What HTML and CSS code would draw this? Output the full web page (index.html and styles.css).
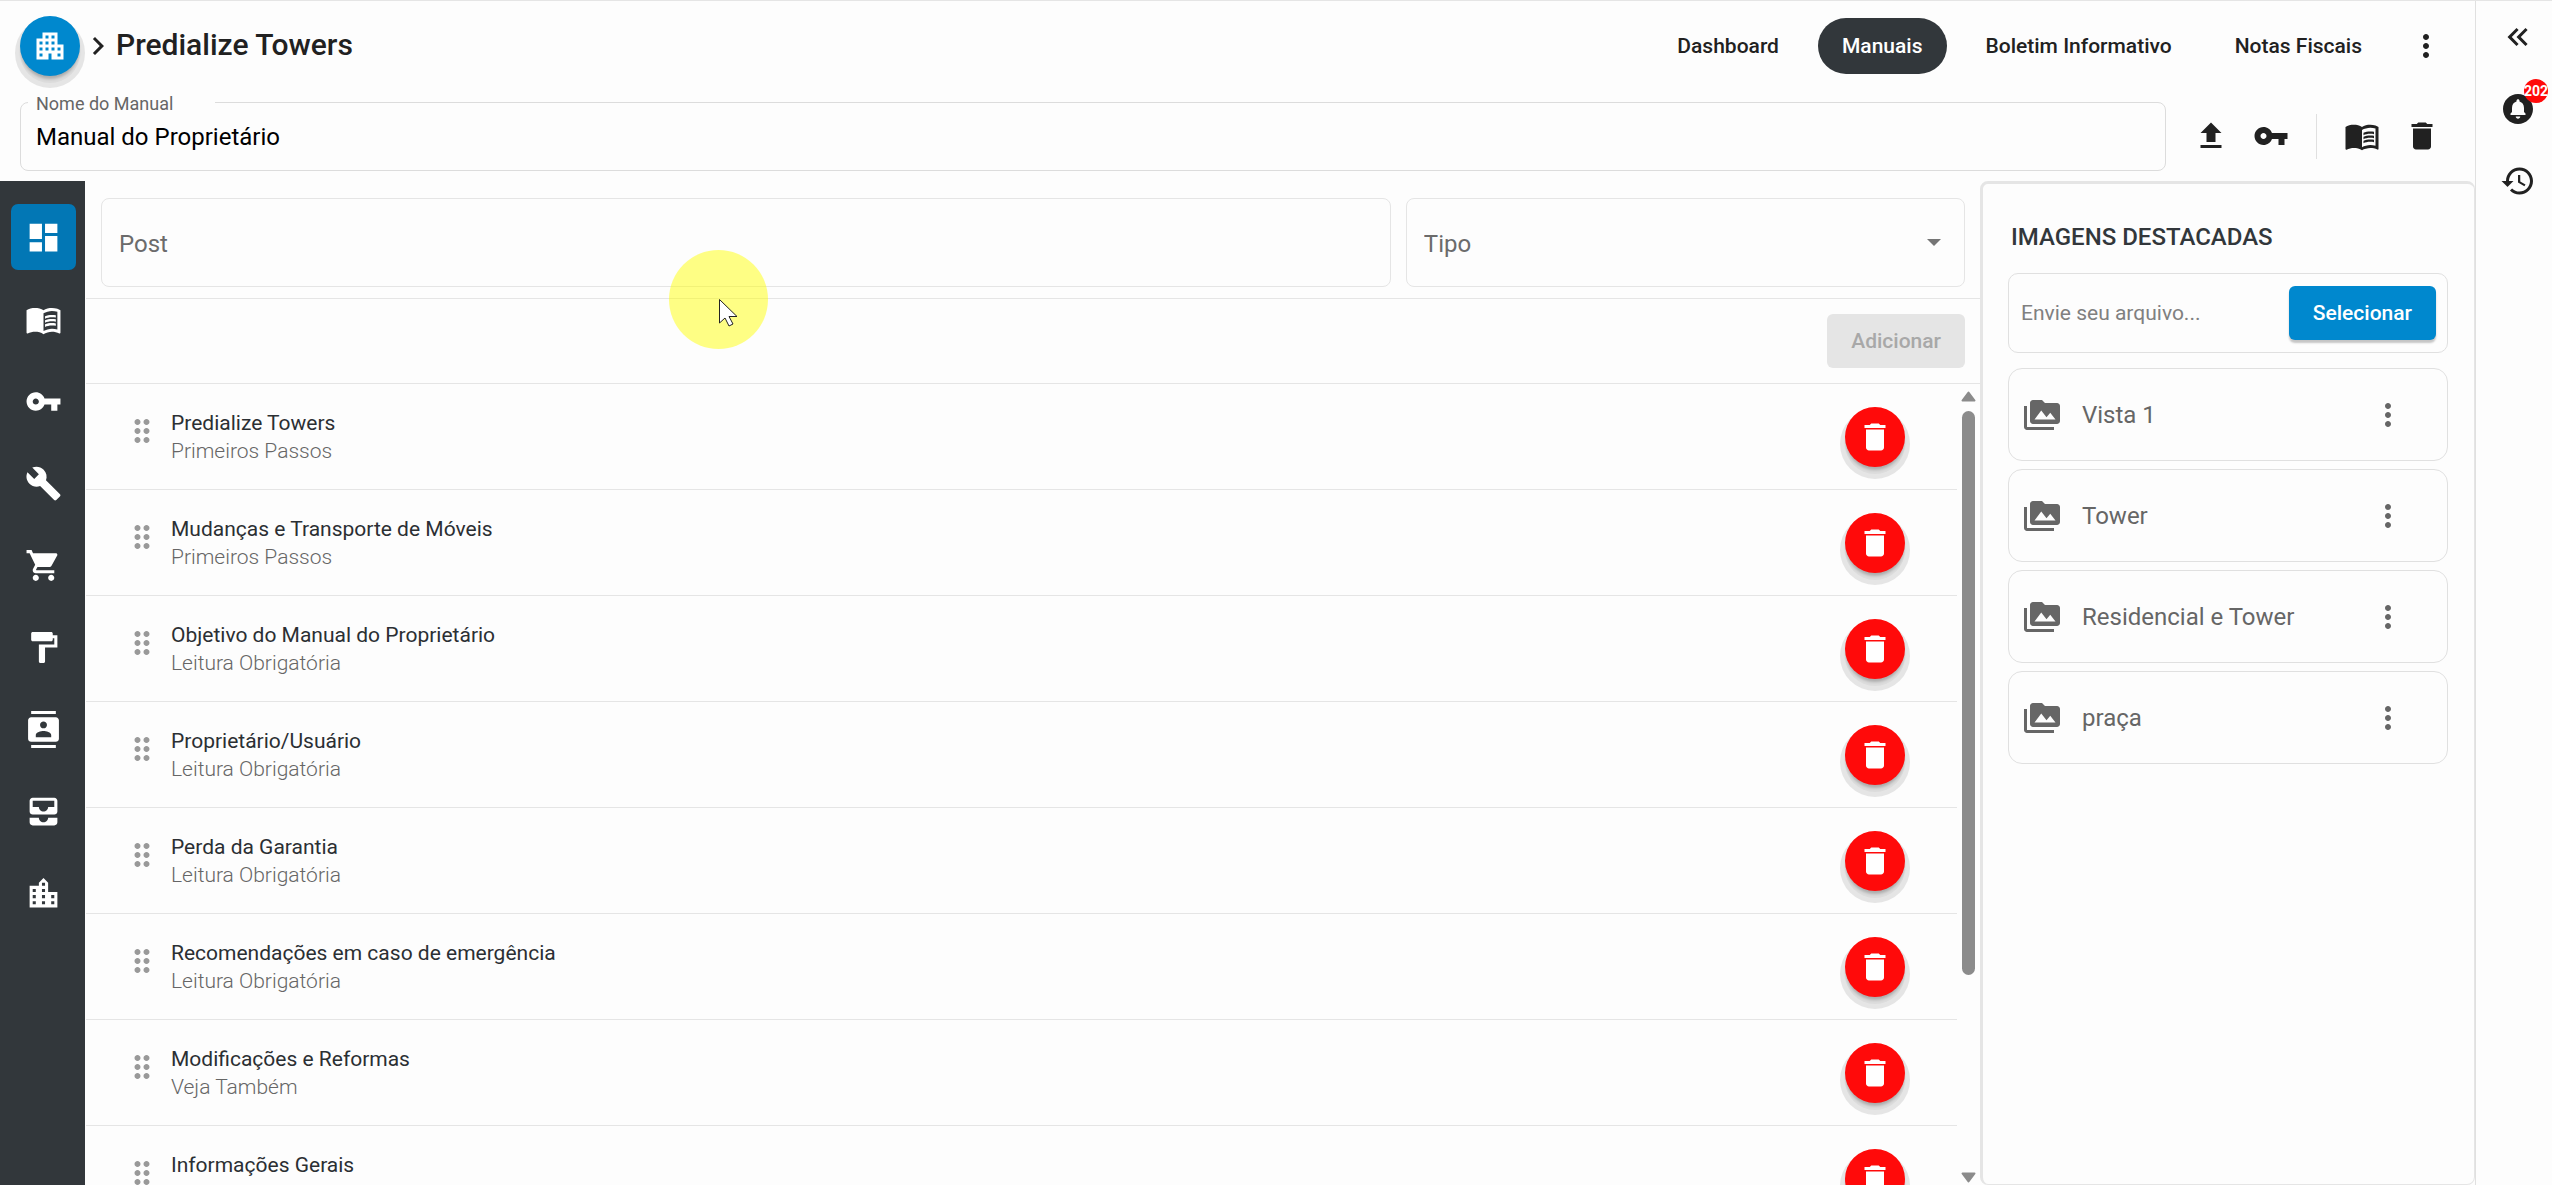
FILE: index.html
```html
<!DOCTYPE html>
<html lang="pt-BR">
<head>
 <meta charset="utf-8">
 <meta name="viewport" content="width=device-width, initial-scale=1">
 <title>Predialize Towers - Manuais</title>
 <link rel="stylesheet" href="styles.css">
</head>

<body>
<!-- icon set -->
<svg class="sprite" aria-hidden="true">
 <symbol id="i-business" viewBox="0 0 24 24"><path fill-rule="evenodd" d="M17 11V3H7v4H3v14h8v-4h2v4h8V11h-4zM7 19H5v-2h2v2zm0-4H5v-2h2v2zm0-4H5V9h2v2zm4 4H9v-2h2v2zm0-4H9V9h2v2zm0-4H9V5h2v2zm4 8h-2v-2h2v2zm0-4h-2V9h2v2zm0-4h-2V5h2v2zm4 12h-2v-2h2v2zm0-4h-2v-2h2v2z"/></symbol>
 <symbol id="i-chevron" viewBox="0 0 24 24"><path d="M10 6L8.590 7.410 13.170 12l-4.580 4.590L10 18l6-6z"/></symbol>
 <symbol id="i-more" viewBox="0 0 24 24"><path d="M12 8c1.100 0 2-.9 2-2s-.9-2-2-2-2 .9-2 2 .9 2 2 2zm0 2c-1.100 0-2 .9-2 2s.9 2 2 2 2-.9 2-2-.9-2-2-2zm0 6c-1.100 0-2 .9-2 2s.9 2 2 2 2-.9 2-2-.9-2-2-2z"/></symbol>
 <symbol id="i-upload" viewBox="0 0 24 24"><path d="M9 16h6v-6h4l-7-7-7 7h4zm-4 2h14v2H5z"/></symbol>
 <symbol id="i-key" viewBox="0 0 24 24"><path d="M12.650 10C11.830 7.670 9.610 6 7 6c-3.310 0-6 2.690-6 6s2.690 6 6 6c2.610 0 4.830-1.670 5.650-4H17v4h4v-4h2v-4H12.650zM7 14c-1.100 0-2-.9-2-2s.9-2 2-2 2 .9 2 2-.9 2-2 2z"/></symbol>
 <symbol id="i-book" viewBox="0 0 24 24"><path d="M21 5c-1.110-.35-2.330-.5-3.500-.5-1.950 0-4.050.4-5.500 1.500-1.450-1.100-3.550-1.500-5.500-1.500S2.450 4.900 1 6v14.650c0 .25.250.5.5.5.1 0 .15-.05.25-.05C3.100 20.450 5.050 20 6.500 20c1.950 0 4.050.4 5.500 1.500 1.350-.85 3.800-1.500 5.500-1.500 1.650 0 3.350.3 4.750 1.050.1.050.15.050.25.050.25 0 .5-.25.5-.5V6c-.6-.45-1.250-.75-2-1zm0 13.500c-1.100-.35-2.300-.5-3.500-.5-1.700 0-4.150.65-5.500 1.500V8c1.350-.85 3.800-1.500 5.500-1.500 1.200 0 2.400.15 3.500.5v11.500z"/><path d="M17.500 10.500c.88 0 1.730.09 2.500.26V9.240c-.79-.15-1.640-.24-2.500-.24-1.700 0-3.240.29-4.500.83v1.660c1.130-.64 2.700-.99 4.500-.99zM13 12.490v1.660c1.130-.64 2.700-.99 4.500-.99.88 0 1.730.09 2.500.26V11.900c-.79-.15-1.640-.24-2.500-.24-1.700 0-3.240.3-4.500.83zM17.500 14.330c-1.700 0-3.240.29-4.500.83v1.660c1.130-.64 2.700-.99 4.500-.99.88 0 1.730.09 2.500.26v-1.520c-.79-.16-1.640-.24-2.500-.24z"/></symbol>
 <symbol id="i-trash" viewBox="0 0 24 24"><path d="M6 19c0 1.100.9 2 2 2h8c1.100 0 2-.9 2-2V7H6v12zM19 4h-3.500l-1-1h-5l-1 1H5v2h14V4z"/></symbol>
 <symbol id="i-dashboard" viewBox="0 0 24 24"><path d="M3 13h8V3H3v10zm0 8h8v-6H3v6zm10 0h8V11h-8v10zm0-18v6h8V3h-8z"/></symbol>
 <symbol id="i-wrench" viewBox="0 0 24 24"><path d="M22.700 19l-9.100-9.100c.9-2.300.4-5-1.500-6.900-2-2-5-2.400-7.400-1.300L9 6 6 9 1.600 4.700C.4 7.100.9 10.100 2.900 12.100c1.900 1.900 4.600 2.400 6.900 1.500l9.100 9.100c.4.4 1 .4 1.400 0l2.300-2.300c.5-.4.5-1.100.1-1.400z"/></symbol>
 <symbol id="i-cart" viewBox="0 0 24 24"><path d="M7 18c-1.100 0-1.990.9-1.990 2S5.900 22 7 22s2-.9 2-2-.9-2-2-2zM1 2v2h2l3.600 7.590-1.350 2.450c-.16.280-.25.610-.25.960 0 1.100.9 2 2 2h12v-2H7.420c-.14 0-.25-.11-.25-.25l.03-.12.900-1.630h7.450c.75 0 1.410-.41 1.750-1.030l3.580-6.490c.08-.14.120-.31.120-.48 0-.55-.45-1-1-1H5.210l-.94-2H1zm16 16c-1.100 0-1.990.9-1.990 2s.89 2 1.990 2 2-.9 2-2-.9-2-2-2z"/></symbol>
 <symbol id="i-paint" viewBox="0 0 24 24"><path d="M18 4V3c0-.55-.45-1-1-1H5c-.55 0-1 .45-1 1v4c0 .55.450 1 1 1h12c.55 0 1-.45 1-1V6h1v4H9v11c0 .55.450 1 1 1h2c.55 0 1-.45 1-1v-9h8V4h-3z"/></symbol>
 <symbol id="i-contacts" viewBox="0 0 24 24"><path d="M20 0H4v2h16V0zM4 24h16v-2H4v2zM20 4H4c-1.100 0-2 .9-2 2v12c0 1.100.9 2 2 2h16c1.100 0 2-.9 2-2V6c0-1.100-.9-2-2-2zm-8 2.750c1.240 0 2.250 1.010 2.250 2.250s-1.010 2.250-2.250 2.250S9.750 10.240 9.750 9 10.760 6.750 12 6.750zM17 17H7v-1.500c0-1.670 3.330-2.500 5-2.500s5 .83 5 2.500V17z"/></symbol>
 <symbol id="i-inbox" viewBox="0 0 24 24"><path d="M19 3H5c-1.100 0-2 .9-2 2v7c0 1.100.9 2 2 2h14c1.100 0 2-.9 2-2V5c0-1.100-.9-2-2-2zm0 6h-4c0 1.620-1.380 3-3 3s-3-1.380-3-3H5V5h14v4zm-4 7h6v3c0 1.100-.9 2-2 2H5c-1.100 0-2-.9-2-2v-3h6c0 1.660 1.340 3 3 3s3-1.340 3-3z"/></symbol>
 <symbol id="i-city" viewBox="0 0 24 24"><path d="M15 11V5l-3-3-3 3v2H3v14h18V11h-6zm-8 8H5v-2h2v2zm0-4H5v-2h2v2zm0-4H5V9h2v2zm6 8h-2v-2h2v2zm0-4h-2v-2h2v2zm0-4h-2V9h2v2zm0-4h-2V5h2v2zm6 12h-2v-2h2v2zm0-4h-2v-2h2v2z"/></symbol>
 <symbol id="i-drag" viewBox="0 0 24 24"><path d="M11 18c0 1.100-.9 2-2 2s-2-.9-2-2 .9-2 2-2 2 .9 2 2zm-2-8c-1.100 0-2 .9-2 2s.9 2 2 2 2-.9 2-2-.9-2-2-2zm0-6c-1.100 0-2 .9-2 2s.9 2 2 2 2-.9 2-2-.9-2-2-2zm6 4c1.100 0 2-.9 2-2s-.9-2-2-2-2 .9-2 2 .9 2 2 2zm0 2c-1.100 0-2 .9-2 2s.9 2 2 2 2-.9 2-2-.9-2-2-2zm0 6c-1.100 0-2 .9-2 2s.9 2 2 2 2-.9 2-2-.9-2-2-2z"/></symbol>
 <symbol id="i-media" viewBox="0 0 24 24"><path d="M2 6H0v14c0 1.100.9 2 2 2h18v-2H2V6zm20-2h-8l-2-2H6c-1.100 0-1.990.9-1.990 2L4 16c0 1.100.9 2 2 2h16c1.100 0 2-.9 2-2V6c0-1.100-.9-2-2-2zM7 15l4.500-6 3.500 4.510 2.500-3.010L21 15H7z"/></symbol>
 <symbol id="i-collapse" viewBox="0 0 24 24"><path d="M18.410 7.410L17 6l-6 6 6 6 1.410-1.410L13.830 12zM12.410 7.410L11 6l-6 6 6 6 1.410-1.410L7.830 12z"/></symbol>
 <symbol id="i-bell" viewBox="0 0 24 24"><path d="M12 2C6.480 2 2 6.480 2 12s4.480 10 10 10 10-4.480 10-10S17.520 2 12 2zm0 16.500c-.83 0-1.500-.67-1.500-1.500h3c0 .83-.67 1.500-1.500 1.500zm5-2.500H7v-1l1-1v-2.610C8 9.270 9.030 7.470 11 7v-.5c0-.57.430-1 1-1s1 .43 1 1V7c1.970.47 3 2.280 3 4.390V14l1 1v1z"/></symbol>
 <symbol id="i-history" viewBox="0 0 24 24"><path d="M13 3c-4.970 0-9 4.030-9 9H1l3.890 3.890.07.140L9 12H6c0-3.870 3.130-7 7-7s7 3.130 7 7-3.130 7-7 7c-1.930 0-3.680-.79-4.940-2.060l-1.420 1.420C8.270 19.990 10.510 21 13 21c4.970 0 9-4.030 9-9s-4.030-9-9-9zm-1 5v5l4.280 2.540.72-1.210-3.500-2.080V8H12z"/></symbol>
</svg>

<div class="app">
 <div class="page">
  <header class="topbar">
   <a class="fab avatar" href="#" aria-label="Empreendimentos"><svg class="icon"><use href="#i-business"/></svg></a>
   <svg class="icon crumb"><use href="#i-chevron"/></svg>
   <h1>Predialize Towers</h1>
   <nav class="menu">
    <a href="#">Dashboard</a>
    <a href="#" class="active">Manuais</a>
    <a href="#">Boletim Informativo</a>
    <a href="#">Notas Fiscais</a>
    <button class="icon-btn" aria-label="Mais"><svg class="icon"><use href="#i-more"/></svg></button>
   </nav>
  </header>

  <div class="manual-bar">
   <fieldset class="outlined">
    <legend><label for="manual">Nome do Manual</label></legend>
    <input type="text" id="manual" value="Manual do Proprietário">
   </fieldset>
   <div class="tools">
    <button class="icon-btn" aria-label="Publicar"><svg class="icon"><use href="#i-upload"/></svg></button>
    <button class="icon-btn" aria-label="Acesso"><svg class="icon"><use href="#i-key"/></svg></button>
    <span class="divider"></span>
    <button class="icon-btn" aria-label="Ler manual"><svg class="icon"><use href="#i-book"/></svg></button>
    <button class="icon-btn" aria-label="Excluir manual"><svg class="icon"><use href="#i-trash"/></svg></button>
   </div>
  </div>

  <div class="workspace">
   <nav class="sidebar">
    <a href="#" class="active" aria-label="Painel"><svg class="icon"><use href="#i-dashboard"/></svg></a>
    <a href="#" aria-label="Manual"><svg class="icon"><use href="#i-book"/></svg></a>
    <a href="#" aria-label="Chaves"><svg class="icon"><use href="#i-key"/></svg></a>
    <a href="#" aria-label="Manutenção"><svg class="icon"><use href="#i-wrench"/></svg></a>
    <a href="#" aria-label="Fornecedores"><svg class="icon"><use href="#i-cart"/></svg></a>
    <a href="#" aria-label="Acabamentos"><svg class="icon"><use href="#i-paint"/></svg></a>
    <a href="#" aria-label="Contatos"><svg class="icon"><use href="#i-contacts"/></svg></a>
    <a href="#" aria-label="Caixa de entrada"><svg class="icon"><use href="#i-inbox"/></svg></a>
    <a href="#" aria-label="Condomínio"><svg class="icon"><use href="#i-city"/></svg></a>
   </nav>

   <main class="content">
    <form class="filters">
     <input class="field post" type="text" placeholder="Post" aria-label="Post">
     <div class="select-wrap">
      <select class="field" aria-label="Tipo"><option>Tipo</option></select>
     </div>
    </form>
    <div class="actions">
     <button class="btn" disabled>Adicionar</button>
    </div>
    <div class="list-wrap">
     <ul class="posts">
      <li>
       <svg class="icon drag"><use href="#i-drag"/></svg>
       <div class="text"><h3>Predialize Towers</h3><p>Primeiros Passos</p></div>
       <button class="fab delete" aria-label="Excluir"><svg class="icon"><use href="#i-trash"/></svg></button>
      </li>
      <li>
       <svg class="icon drag"><use href="#i-drag"/></svg>
       <div class="text"><h3>Mudanças e Transporte de Móveis</h3><p>Primeiros Passos</p></div>
       <button class="fab delete" aria-label="Excluir"><svg class="icon"><use href="#i-trash"/></svg></button>
      </li>
      <li>
       <svg class="icon drag"><use href="#i-drag"/></svg>
       <div class="text"><h3>Objetivo do Manual do Proprietário</h3><p>Leitura Obrigatória</p></div>
       <button class="fab delete" aria-label="Excluir"><svg class="icon"><use href="#i-trash"/></svg></button>
      </li>
      <li>
       <svg class="icon drag"><use href="#i-drag"/></svg>
       <div class="text"><h3>Proprietário/Usuário</h3><p>Leitura Obrigatória</p></div>
       <button class="fab delete" aria-label="Excluir"><svg class="icon"><use href="#i-trash"/></svg></button>
      </li>
      <li>
       <svg class="icon drag"><use href="#i-drag"/></svg>
       <div class="text"><h3>Perda da Garantia</h3><p>Leitura Obrigatória</p></div>
       <button class="fab delete" aria-label="Excluir"><svg class="icon"><use href="#i-trash"/></svg></button>
      </li>
      <li>
       <svg class="icon drag"><use href="#i-drag"/></svg>
       <div class="text"><h3>Recomendações em caso de emergência</h3><p>Leitura Obrigatória</p></div>
       <button class="fab delete" aria-label="Excluir"><svg class="icon"><use href="#i-trash"/></svg></button>
      </li>
      <li>
       <svg class="icon drag"><use href="#i-drag"/></svg>
       <div class="text"><h3>Modificações e Reformas</h3><p>Veja Também</p></div>
       <button class="fab delete" aria-label="Excluir"><svg class="icon"><use href="#i-trash"/></svg></button>
      </li>
      <li>
       <svg class="icon drag"><use href="#i-drag"/></svg>
       <div class="text"><h3>Informações Gerais</h3><p>Leitura Obrigatória</p></div>
       <button class="fab delete" aria-label="Excluir"><svg class="icon"><use href="#i-trash"/></svg></button>
      </li>
     </ul>
     <div class="scrollbar">
      <svg class="arrow" viewBox="0 0 15 11"><path d="M7.500 1.500L13.500 9.500H1.500z"/></svg>
      <div class="track"><div class="thumb"></div></div>
      <svg class="arrow" viewBox="0 0 15 11"><path d="M7.500 9.500L1.500 1.500H13.500z"/></svg>
     </div>
    </div>
   </main>

   <aside class="images">
    <h2>IMAGENS DESTACADAS</h2>
    <div class="upload">
     <span>Envie seu arquivo...</span>
     <button class="btn primary">Selecionar</button>
    </div>
    <ul class="cards">
     <li><svg class="icon"><use href="#i-media"/></svg><span>Vista 1</span><button class="icon-btn" aria-label="Opções"><svg class="icon"><use href="#i-more"/></svg></button></li>
     <li><svg class="icon"><use href="#i-media"/></svg><span>Tower</span><button class="icon-btn" aria-label="Opções"><svg class="icon"><use href="#i-more"/></svg></button></li>
     <li><svg class="icon"><use href="#i-media"/></svg><span>Residencial e Tower</span><button class="icon-btn" aria-label="Opções"><svg class="icon"><use href="#i-more"/></svg></button></li>
     <li><svg class="icon"><use href="#i-media"/></svg><span>praça</span><button class="icon-btn" aria-label="Opções"><svg class="icon"><use href="#i-more"/></svg></button></li>
    </ul>
   </aside>
  </div>
 </div>

 <div class="rail">
  <button class="icon-btn" aria-label="Recolher"><svg class="icon"><use href="#i-collapse"/></svg></button>
  <button class="icon-btn" aria-label="Notificações"><svg class="icon"><use href="#i-bell"/></svg><span class="badge">202</span></button>
  <button class="icon-btn" aria-label="Histórico"><svg class="icon"><use href="#i-history"/></svg></button>
 </div>
</div>

<!-- highlighted pointer -->
<div class="pointer">
 <svg viewBox="0 0 19 28"><path d="M.5.500V24L6 19l4 8 4-2-4-7.500h8z" fill="#fff" stroke="#222"/></svg>
</div>
</body>
</html>
```
FILE: styles.css
```css
* { box-sizing: border-box; }
body {
  margin: 0;
  height: 100vh;
  overflow: hidden;
  background: #fdfdfd;
  color: #212121;
  font-family: Roboto, "Liberation Sans", sans-serif;
  font-size: 21px;
}
h1, h2, h3, p, ul, fieldset { margin: 0; padding: 0; }
ul { list-style: none; }
a { color: inherit; text-decoration: none; }
button, input, select { font: inherit; color: inherit; }
button { border: 0; background: none; padding: 0; }

.sprite { display: none; }
.icon {
  display: block;
  flex: none;
  width: 36px;
  height: 36px;
  fill: currentColor;
}
.icon-btn {
  display: flex;
  flex: none;
  align-items: center;
  justify-content: center;
  width: 60px;
  height: 60px;
}
.fab {
  display: flex;
  flex: none;
  align-items: center;
  justify-content: center;
  width: 60px;
  height: 60px;
  border-radius: 50%;
  color: #fff;
  box-shadow: 0 4px 3px -1px rgba(0,0,0,.22), 0 7px 0 0 rgba(0,0,0,.04), 0 7px 0 5px #e5e5e5;
}

.app {
  display: flex;
  height: 100%;
  border-top: 1px solid #e5e5e5;
}
.page {
  flex: 1;
  min-width: 0;
  display: flex;
  flex-direction: column;
}

/* top bar */
.topbar {
  display: flex;
  align-items: center;
  padding: 15px 19px 0 20px;
}
.avatar { background: #0088ce; }
.crumb { width: 36px; height: 36px; }
.topbar h1 {
  padding-bottom: 3px;
  font-size: 30px;
  font-weight: 500;
}
.menu {
  display: flex;
  align-items: center;
  gap: 15px;
  margin-left: auto;
  font-weight: 500;
}
.menu a {
  padding: 0 24px;
  border-radius: 28px;
  line-height: 56px;
}
.menu .active { background: #32373b; color: #fff; }
.menu .icon-btn { margin-left: -5px; }

.manual-bar {
  display: flex;
  align-items: center;
  padding: 16px 23px 10px 20px;
}
.outlined {
  flex: 1;
  height: 79px;
  padding: 0 15px;
  border: 1px solid #dcdcdc;
  border-radius: 8px;
}
.outlined legend {
  width: 187px;
  height: 20px;
  margin-left: -8px;
  padding: 0 8px;
  font-size: 18px;
  line-height: 24px;
  color: #666;
}
.outlined input {
  width: 100%;
  height: 50px;
  padding: 0;
  border: 0;
  background: none;
  font-size: 24px;
  color: #000;
}
.tools {
  display: flex;
  align-items: center;
  margin-left: 15px;
  padding-top: 9px;
}
.divider { width: 1px; height: 45px; margin: 0 15px; background: #e0e0e0; }

/* workspace */
.workspace {
  flex: 1;
  display: flex;
  min-height: 0;
}
.sidebar {
  display: flex;
  flex-direction: column;
  gap: 16px;
  width: 85px;
  padding: 23px 9px 0 11px;
  background: #32373b;
  color: #fff;
}
.sidebar a {
  display: flex;
  align-items: center;
  justify-content: center;
  height: 66px;
  border-radius: 7px;
}
.sidebar .active { background: #0277b5; }
.sidebar .icon { width: 37px; height: 37px; }

.content {
  flex: 1;
  min-width: 0;
  display: flex;
  flex-direction: column;
  margin-left: 1px;
}
.filters {
  display: flex;
  gap: 15px;
  padding: 17px 15px 11px;
  border-bottom: 1px solid #e5e5e5;
}
.field {
  width: 100%;
  height: 89px;
  padding: 2px 17px 0;
  border: 1px solid #e5e5e5;
  border-radius: 8px;
  background: none;
  font-size: 24px;
  color: #6b6b6b;
}
.field::placeholder { color: #6b6b6b; opacity: 1; }
.post { flex: 1; }
.select-wrap { position: relative; width: 30%; }
.select-wrap select { appearance: none; }
.select-wrap::after {
  content: "";
  position: absolute;
  right: 24px;
  top: 41px;
  border: 7px solid transparent;
  border-top-color: #757575;
  border-bottom: 0;
}
.actions {
  display: flex;
  justify-content: flex-end;
  padding: 15px;
  border-bottom: 1px solid #e5e5e5;
}
.btn {
  height: 54px;
  padding: 0 24px;
  border-radius: 6px;
  font-weight: 500;
}
.btn:disabled { background: #e5e5e5; color: #a8a8a8; }
.primary {
  background: #0088ce;
  color: #fff;
  box-shadow: 0 3px 2px rgba(0,0,0,.22);
}

.list-wrap {
  flex: 1;
  display: flex;
  min-height: 0;
}
.posts {
  flex: 1;
  overflow: hidden;
}
.posts li {
  display: flex;
  height: 106px;
  padding: 23px 52px 0 38px;
  border-bottom: 1px solid #e5e5e5;
}
.drag { margin-top: 6px; color: #999; }
.text { flex: 1; margin-left: 11px; padding-top: 2px; }
.text h3 {
  font-size: 21px;
  font-weight: 400;
  line-height: 28px;
  color: #2b2f33;
}
.text p {
  font-weight: 300;
  line-height: 28px;
  color: #666;
}
.delete { background: #ff0a0a; }

.scrollbar {
  display: flex;
  flex-direction: column;
  align-items: center;
  gap: 9px;
  width: 23px;
  padding: 7px 0 2px;
}
.arrow { display: block; width: 15px; height: 11px; fill: #8b8b8b; stroke: #8b8b8b; stroke-width: 2; stroke-linejoin: round; }
.track { flex: 1; width: 13px; }
.thumb { height: 75%; border-radius: 7px; background: #8b8b8b; }

/* highlighted images */
.images {
  width: 495px;
  padding: 37px 26px 0 25px;
  border: 3px solid #e5e5e5;
  border-width: 3px 1px 1px 3px;
  border-radius: 8px;
}
.images h2 {
  margin-left: 3px;
  font-size: 24px;
  font-weight: 500;
  line-height: 32px;
  color: #32373b;
}
.upload {
  display: flex;
  align-items: center;
  justify-content: space-between;
  height: 80px;
  margin: 20px 0 15px;
  padding: 0 11px 0 12px;
  border: 1px solid #e0e0e0;
  border-radius: 10px;
  color: #808080;
}
.cards { display: grid; gap: 8px; }
.cards li {
  display: flex;
  align-items: center;
  height: 93px;
  padding: 0 29px 0 15px;
  border: 1px solid #e0e0e0;
  border-radius: 14px;
  font-size: 24px;
  color: #666;
}
.cards span { flex: 1; margin-left: 22px; }

/* right rail */
.rail {
  display: flex;
  flex-direction: column;
  align-items: center;
  gap: 12px;
  width: 77px;
  padding: 6px 0 0 8px;
  border-left: 1px solid #e0e0e0;
}
.rail .icon-btn { position: relative; }
.badge {
  position: absolute;
  top: 0;
  right: 0;
  width: 24px;
  border-radius: 12px;
  background: #ff0a0a;
  color: #fff;
  font-size: 14px;
  font-weight: 700;
  line-height: 24px;
  text-align: center;
}

.pointer {
  position: absolute;
  left: 669px;
  top: 250px;
  width: 99px;
  height: 99px;
  border-radius: 50%;
  background: rgba(255,255,0,.48);
}
.pointer svg { position: absolute; left: 50px; top: 49px; width: 19px; height: 28px; }
```
